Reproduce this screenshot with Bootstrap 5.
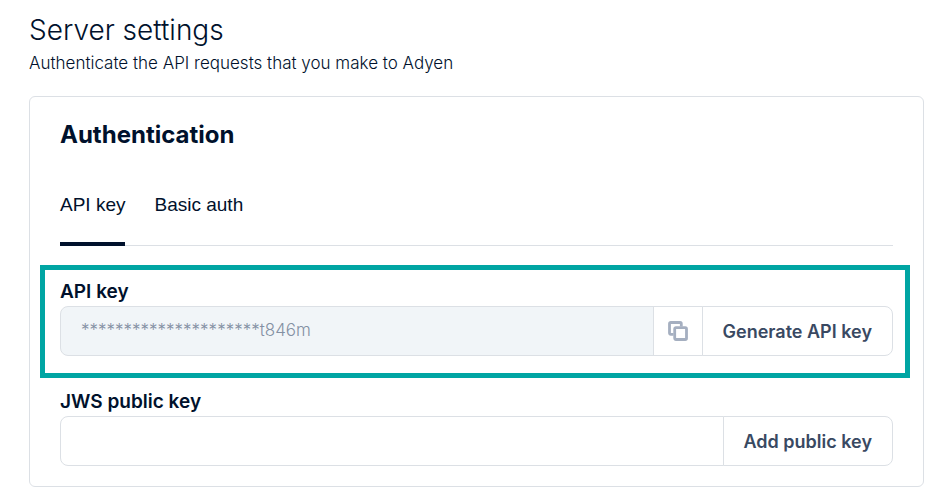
<!DOCTYPE html>
<html lang="en">
<head>
<meta charset="utf-8">
<meta name="viewport" content="width=device-width, initial-scale=1">
<title>Server settings</title>
<link href="https://cdn.jsdelivr.net/npm/bootstrap@5.3.0/dist/css/bootstrap.min.css" rel="stylesheet">
<style>
  body { font-family: Inter, "Liberation Sans", sans-serif; color: #00112c; font-size: 18px; line-height: 28px; }
  .page { padding: 12px 25px 12px 29px; }
  .page-title { font-size: 28px; line-height: 36px; font-weight: 300; }
  .page-intro { font-size: 17px; font-weight: 300; line-height: 30px; margin-bottom: 18px; }
  .settings-card { --bs-card-border-color: #dce0e5; --bs-card-border-radius: 6px; --bs-card-spacer-x: 30px; --bs-card-spacer-y: 20px; color: inherit; }
  .card-heading { font-size: 24px; line-height: 36px; font-weight: 700; }
  .settings-tabs { gap: 29px; margin-top: 28px; --bs-nav-tabs-border-color: #dce0e5; --bs-nav-tabs-border-width: 1px; }
  .settings-tabs .nav-link { font: 19px/24px "Liberation Sans", sans-serif; color: #00112c; padding: 12px 0 25px; border: 0; border-bottom: 4px solid transparent; border-radius: 0; }
  .settings-tabs .nav-link.active { color: #00112c; border-bottom-color: #00112c; }
  .highlight { border: 5px solid #00a5a3; margin: 19px -17px 0 -20px; padding: 7px 12px 17px 15px; }
  .key-label { font-size: 19px; font-weight: 600; line-height: 29px; display: block; }
  .jws { margin-top: 9px; }
  .key-group { height: 50px; }
  .key-group .form-control { border-color: #dce0e5; border-radius: 8px; padding: 0 20px; font-size: 17px; font-weight: 300; }
  .key-group .form-control:disabled { background: #f1f5f8; color: #8390a3; opacity: 1; }
  .key-group .btn { --bs-btn-border-color: #dce0e5; --bs-btn-color: #394962; --bs-btn-bg: #fff; --bs-btn-font-size: 18px; --bs-btn-font-weight: 600; --bs-btn-padding-x: 20px; --bs-btn-border-radius: 8px; }
  .key-group .copy-btn { --bs-btn-padding-x: 14px; }
</style>
<script src="https://cdn.jsdelivr.net/npm/bootstrap@5.3.0/dist/js/bootstrap.bundle.min.js" defer></script>
</head>
<body>
<main class="page">
  <h1 class="page-title mb-0">Server settings</h1>
  <p class="page-intro">Authenticate the API requests that you make to Adyen</p>
  <section class="card settings-card">
    <div class="card-body">
      <h2 class="card-heading mb-0">Authentication</h2>
      <div class="nav nav-tabs settings-tabs" role="tablist">
        <button class="nav-link active" type="button" role="tab" aria-selected="true">API key</button>
        <button class="nav-link" type="button" role="tab" aria-selected="false">Basic auth</button>
      </div>
      <div class="highlight">
        <label class="key-label" for="api-key">API key</label>
        <div class="input-group key-group">
          <input class="form-control" id="api-key" type="text" value="*********************t846m" disabled>
          <button class="btn copy-btn d-flex align-items-center" type="button" aria-label="Copy API key">
            <svg width="20" height="20" viewBox="0 0 20 20" fill="none" stroke="#a5afc0" stroke-width="2.8" stroke-linejoin="round" aria-hidden="true">
              <path d="M5.5 13.3H2.7a1.2 1.2 0 0 1-1.2-1.2V2.7a1.2 1.2 0 0 1 1.2-1.2h9.4a1.2 1.2 0 0 1 1.2 1.2v2.8"/>
              <rect x="6.7" y="6.7" width="11.8" height="11.8" rx="1.2"/>
            </svg>
          </button>
          <button class="btn" type="button">Generate API key</button>
        </div>
      </div>
      <div class="jws">
        <label class="key-label" for="jws-key">JWS public key</label>
        <div class="input-group key-group">
          <input class="form-control" id="jws-key" type="text">
          <button class="btn" type="button">Add public key</button>
        </div>
      </div>
    </div>
  </section>
</main>
</body>
</html>
